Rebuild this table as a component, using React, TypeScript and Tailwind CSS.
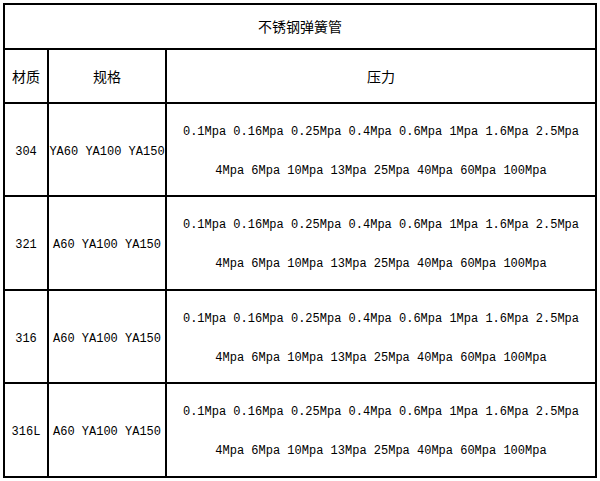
import React from 'react';

const cjk = "font-['Noto_Sans_CJK_SC','Noto_Sans',sans-serif]";
const mono = "font-['Liberation_Mono','Noto_Sans_CJK_SC',monospace]";

const rows = [
  { material: '304', spec: 'YA60 YA100 YA150', h: 'h-[91px]' },
  { material: '321', spec: 'A60 YA100 YA150', h: 'h-[92px]' },
  { material: '316', spec: 'A60 YA100 YA150', h: 'h-[91px]' },
  { material: '316L', spec: 'A60 YA100 YA150', h: 'h-[92px]' },
];

const line1 = '0.1Mpa 0.16Mpa 0.25Mpa 0.4Mpa 0.6Mpa 1Mpa 1.6Mpa 2.5Mpa';
const line2 = '4Mpa 6Mpa 10Mpa 13Mpa 25Mpa 40Mpa 60Mpa 100Mpa';

const App: React.FC = () => {
  return (
    <div className="w-[600px] h-[481px] bg-white pt-[3px] pl-[3px]">
      <div className="w-[594px] border-2 border-black text-black">
        {/* title */}
        <div className={`h-[45px] border-b-2 border-black flex items-center justify-center text-[14px] ${cjk}`}>
          不锈钢弹簧管
        </div>

        {/* header */}
        <div className={`h-[54px] border-b-2 border-black flex text-[14px] ${cjk}`}>
          <div className="w-[44px] border-r-2 border-black flex items-center justify-center">材质</div>
          <div className="w-[118px] border-r-2 border-black flex items-center justify-center">规格</div>
          <div className="flex-1 flex items-center justify-center">压力</div>
        </div>

        {rows.map((r, i) => (
          <div
            key={r.material}
            className={`${r.h} ${i < rows.length - 1 ? 'border-b-2 border-black box-content' : ''} flex text-[12px] ${mono}`}
          >
            <div className="w-[44px] border-r-2 border-black flex items-center justify-center pt-[4px]">{r.material}</div>
            <div className="w-[118px] border-r-2 border-black flex items-center justify-center whitespace-nowrap overflow-hidden pt-[4px]">
              {r.spec}
            </div>
            <div className="flex-1 flex flex-col items-center justify-center leading-[39px] whitespace-nowrap pt-[4px]">
              <div>{line1}</div>
              <div>{line2}</div>
            </div>
          </div>
        ))}
      </div>
    </div>
  );
};

export default App;
